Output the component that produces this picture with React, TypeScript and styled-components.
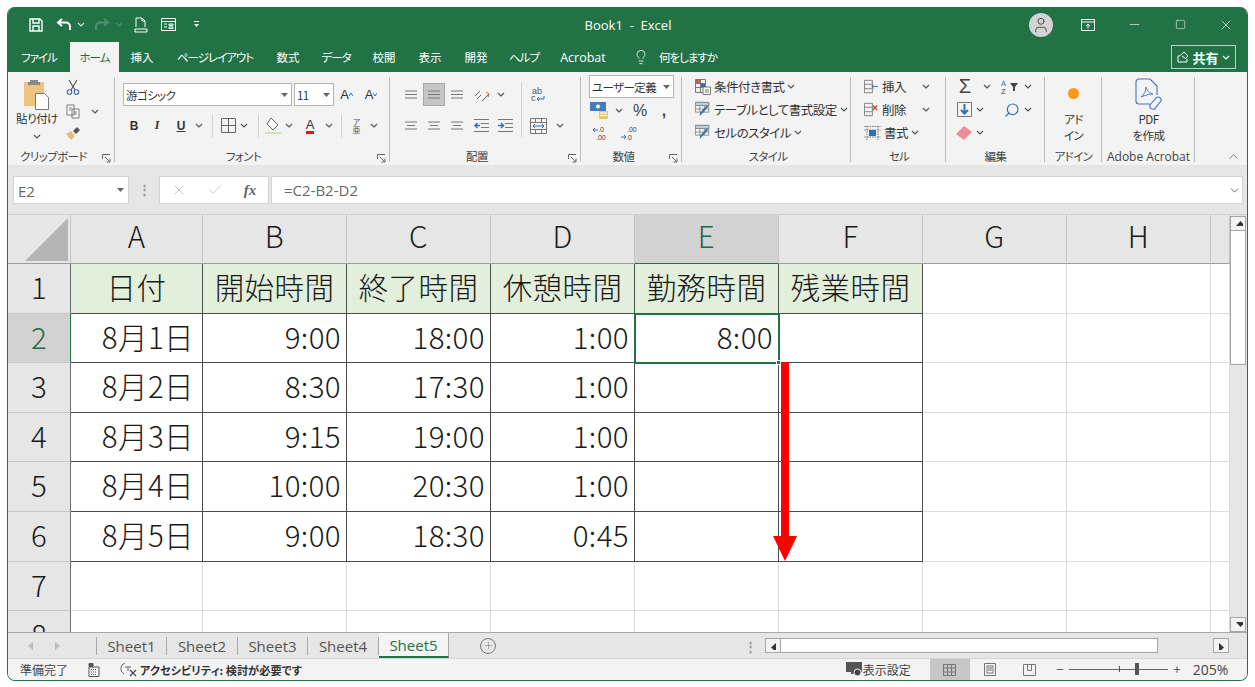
import React from 'react';
import styled, { createGlobalStyle } from 'styled-components';
import { Lightbulb, Minus, Plus, Search, Square, X, Check, ChevronDown, ChevronUp, User } from 'lucide-react';

const GlobalStyle = createGlobalStyle`
  html, body { margin: 0; padding: 0; background: #fff; }
  body { font-family: "Noto Sans CJK JP", "Noto Sans", sans-serif; color: #2b2b2b; }
`;

const GREEN = '#217346';

const Page = styled.div`
  width: 1255px;
  height: 687px;
  padding: 7px 7px 6px 7px;
  box-sizing: border-box;
  overflow: hidden;
`;

const Win = styled.div`
  height: 674px;
  display: flex;
  flex-direction: column;
  border-radius: 8px;
  overflow: hidden;
  background: #e6e6e6;
  border: 1px solid ${GREEN};
  border-top: 0;
  box-sizing: border-box;
`;

/* title bar */
const TitleBar = styled.div`
  height: 35px;
  flex: none;
  background: ${GREEN};
  color: #fff;
  display: flex;
  align-items: center;
  padding-left: 18px;
`;
const Slot = styled.div<{ $w: number }>`
  width: ${(p) => p.$w}px;
  flex: none;
  display: flex;
  align-items: center;
  justify-content: center;
`;
const QuickBar = styled.div`
  display: flex;
  align-items: center;
  width: 400px;
`;
const DocTitle = styled.div`
  width: 404px;
  text-align: center;
  font: 13px "Open Sans", "Noto Sans", sans-serif;
  white-space: pre;
`;
const Avatar = styled.div`
  width: 24px;
  height: 24px;
  border-radius: 50%;
  background: #d3d3d3;
  color: #4a4a4a;
  display: flex;
  align-items: center;
  justify-content: center;
  margin-left: 199px;
`;

/* tab strip */
const TabBar = styled.div`
  height: 30px;
  flex: none;
  background: ${GREEN};
  color: #fff;
  display: flex;
  align-items: stretch;
  font-size: 11.5px;
  font-feature-settings: "palt";
`;
const Tab = styled.div<{ $w: number; $active?: boolean; $tight?: boolean; $latin?: boolean }>`
  width: ${(p) => p.$w}px;
  flex: none;
  display: flex;
  align-items: center;
  justify-content: center;
  background: ${(p) => (p.$active ? '#f3f3f3' : 'transparent')};
  color: ${(p) => (p.$active ? '#1e6b41' : '#fff')};
  letter-spacing: ${(p) => (p.$tight ? '-1px' : '0')};
  ${(p) => (p.$latin ? 'font: 12.5px "Open Sans", "Noto Sans", sans-serif;' : '')}
`;
const TellMe = styled.div`
  display: flex;
  align-items: center;
  gap: 10px;
  margin-left: 16px;
  letter-spacing: -1px;
`;
const ShareBtn = styled.div`
  margin: 3px 11px 3px auto;
  width: 65px;
  box-sizing: border-box;
  border: 1px solid #b6d3c3;
  display: flex;
  align-items: center;
  justify-content: center;
  gap: 3px;
  font-size: 13px;
  font-weight: 700;
`;

/* ribbon */
const Ribbon = styled.div`
  height: 93px;
  flex: none;
  background: #f3f3f3;
  display: flex;
  position: relative;
  font-size: 12px;
  font-feature-settings: "palt";
  color: #333;
`;
const Group = styled.div<{ $w: number; $pad?: number; $plain?: boolean }>`
  width: ${(p) => p.$w}px;
  flex: none;
  box-sizing: border-box;
  position: relative;
  padding: 3px 0 0 ${(p) => p.$pad ?? 0}px;
  display: flex;
  flex-direction: column;
  &::after {
    content: '';
    position: absolute;
    right: 0;
    top: 5px;
    bottom: 3px;
    width: 1px;
    background: ${(p) => (p.$plain ? 'transparent' : '#bdbdbd')};
  }
`;
const GroupBody = styled.div`
  flex: 1;
  display: flex;
  flex-direction: column;
  min-height: 0;
`;
const GroupLabel = styled.div<{ $shift?: number; $latin?: boolean }>`
  height: 19px;
  flex: none;
  line-height: 21px;
  font-size: ${(p) => (p.$latin ? 12 : 11.5)}px;
  letter-spacing: ${(p) => (p.$latin ? 0 : -0.6)}px;
  ${(p) => (p.$latin ? 'font-family: "Open Sans", "Noto Sans", sans-serif;' : '')}
  text-align: center;
  color: #444;
  margin-right: ${(p) => p.$shift ?? 0}px;
  white-space: nowrap;
`;
const Launcher = styled.svg`
  position: absolute;
  right: 4px;
  bottom: 2px;
  width: 9px;
  height: 9px;
`;
const Row = styled.div<{ $h?: number; $top?: number }>`
  display: flex;
  align-items: center;
  height: ${(p) => p.$h ?? 23}px;
  margin-top: ${(p) => p.$top ?? 0}px;
  flex: none;
`;
const Cols = styled.div`
  display: flex;
`;
const Stack = styled.div<{ $w?: number; $top?: number }>`
  display: flex;
  flex-direction: column;
  align-items: center;
  width: ${(p) => (p.$w ? `${p.$w}px` : 'auto')};
  padding-top: ${(p) => p.$top ?? 0}px;
  flex: none;
`;
const LeftStack = styled.div`
  display: flex;
  flex-direction: column;
  flex: none;
`;
const Bar = styled.div<{ $h?: number }>`
  width: 1px;
  height: ${(p) => p.$h ?? 22}px;
  background: #d0d0d0;
  flex: none;
`;
const TallBar = styled(Bar)`
  margin-top: 7px;
`;
const Field = styled.div<{ $w: number; $h?: number }>`
  width: ${(p) => p.$w}px;
  height: ${(p) => p.$h ?? 23}px;
  box-sizing: border-box;
  flex: none;
  background: #fff;
  border: 1px solid #b4b4b4;
  display: flex;
  align-items: center;
  justify-content: space-between;
  padding: 0 3px 0 2px;
  font-size: 11.5px;
  letter-spacing: -0.6px;
  white-space: nowrap;
`;
const Pressed = styled.div`
  width: 22px;
  height: 23px;
  background: #c6c6c6;
  border: 1px solid #a8a8a8;
  box-sizing: border-box;
  display: flex;
  align-items: center;
  justify-content: center;
`;
const Bold = styled.span<{ $face?: string; $italic?: boolean; $under?: boolean; $size?: number }>`
  font: ${(p) => (p.$italic ? 'italic ' : '')}700 ${(p) => p.$size ?? 12}px ${(p) => p.$face ?? '"Liberation Sans"'}, sans-serif;
  text-decoration: ${(p) => (p.$under ? 'underline' : 'none')};
`;
const LetterA = styled.span<{ $mark?: string }>`
  font: 400 13px "Liberation Sans", sans-serif;
  line-height: 13px;
  border-bottom: ${(p) => (p.$mark ? `3px solid ${p.$mark}` : 'none')};
`;
const Glyph = styled.span<{ $size?: number; $weight?: number }>`
  font: ${(p) => p.$weight ?? 400} ${(p) => p.$size ?? 16}px "Liberation Sans", sans-serif;
  color: #444;
`;
const Furigana = styled.span`
  writing-mode: vertical-rl;
  font-size: 8px;
  line-height: 10px;
  letter-spacing: 0;
  color: #555;
`;
const StyleText = styled.span`
  font-size: 12.5px;
  letter-spacing: -0.5px;
  margin-left: 3px;
  white-space: nowrap;
`;
const BigLabel = styled.div`
  font-size: 11.5px;
  line-height: 16px;
  text-align: center;
  white-space: nowrap;
  letter-spacing: -0.5px;
`;
const PasteCaret = styled.div`
  margin-top: 8px;
  display: flex;
`;
const Dot = styled.div`
  width: 11px;
  height: 11px;
  border-radius: 50%;
  background: #f7981d;
  margin: 13px 0 12px;
`;
const Collapse = styled.div`
  position: absolute;
  right: 6px;
  bottom: 1px;
  color: #555;
  display: flex;
`;

/* formula bar */
const FormulaBand = styled.div`
  height: 50px;
  flex: none;
  box-sizing: border-box;
  background: #e6e6e6;
  padding: 11px 4px 11px 5px;
  display: flex;
  align-items: stretch;
  color: #666;
`;
const FBox = styled.div<{ $w?: number; $grow?: boolean }>`
  background: #fff;
  border: 1px solid #d4d4d4;
  box-sizing: border-box;
  width: ${(p) => (p.$w ? `${p.$w}px` : 'auto')};
  flex: ${(p) => (p.$grow ? '1' : 'none')};
  display: flex;
  align-items: center;
  font: 15px "Open Sans", "Noto Sans", sans-serif;
`;
const NameText = styled.span`
  margin-left: 4px;
  flex: 1;
  padding-top: 2px;
`;
const Grip = styled.div`
  width: 30px;
  flex: none;
  text-align: center;
  color: #999;
  line-height: 26px;
  font-size: 13px;
  font-weight: 700;
`;
const FormulaText = styled.span`
  flex: 1;
  margin-left: 12px;
`;

/* sheet */
const SheetArea = styled.div`
  flex: 1;
  min-height: 0;
  display: flex;
  background: #fff;
  position: relative;
  overflow: hidden;
  border-top: 1px solid #d0d0d0;
  margin-top: -1px;
`;
const CellGrid = styled.div`
  width: 1222px;
  flex: none;
  display: grid;
  grid-template-columns: 63px 132px repeat(7, 144px) 19px;
  grid-template-rows: 49px repeat(8, 49.6px);
  font-size: 29.5px;
  font-weight: 300;
  letter-spacing: 0.4px;
  color: #1a1a1a;
  line-height: 1;
`;
const Corner = styled.div`
  background: #e6e6e6;
  border-right: 1px solid #c6c6c6;
  border-bottom: 1px solid #9c9c9c;
  position: relative;
  &::after {
    content: '';
    position: absolute;
    right: 2px;
    bottom: 2px;
    border-style: solid;
    border-width: 0 0 43px 43px;
    border-color: transparent transparent #b5b5b5 transparent;
  }
`;
const ColHead = styled.div<{ $on?: boolean }>`
  background: ${(p) => (p.$on ? '#d2d2d2' : '#e6e6e6')};
  color: ${(p) => (p.$on ? '#1f6a41' : '#1a1a1a')};
  border-right: 1px solid #c6c6c6;
  border-bottom: 1px solid ${(p) => (p.$on ? GREEN : '#9c9c9c')};
  display: flex;
  align-items: center;
  justify-content: center;
  box-sizing: border-box;
  padding-bottom: 6px;
`;
const RowHead = styled.div<{ $on?: boolean }>`
  background: ${(p) => (p.$on ? '#d2d2d2' : '#e6e6e6')};
  color: ${(p) => (p.$on ? '#1f6a41' : '#1a1a1a')};
  border-bottom: 1px solid #c6c6c6;
  border-right: 1px solid ${(p) => (p.$on ? GREEN : '#6a6a6a')};
  display: flex;
  align-items: center;
  justify-content: center;
  box-sizing: border-box;
  padding-bottom: 3px;
`;
const Cell = styled.div<{ $ruled?: boolean; $head?: boolean; $sel?: boolean; $date?: boolean }>`
  box-sizing: border-box;
  border-right: 1px solid ${(p) => (p.$ruled ? '#4a4a4a' : '#dcdcdc')};
  border-bottom: 1px solid ${(p) => (p.$ruled ? '#4a4a4a' : '#dcdcdc')};
  background: ${(p) => (p.$head ? '#e2efda' : '#fff')};
  display: flex;
  align-items: center;
  justify-content: ${(p) => (p.$head ? 'center' : 'flex-end')};
  padding-right: ${(p) => (p.$head ? 0 : p.$date ? 8 : 5)}px;
  padding-bottom: 3px;
  position: relative;
  white-space: nowrap;
  ${(p) =>
    p.$sel
      ? `outline: 2px solid ${GREEN}; outline-offset: -1px; z-index: 2;
         &::after { content: ''; position: absolute; right: -3px; bottom: -3px; width: 5px; height: 5px; background: ${GREEN}; border: 1px solid #fff; box-sizing: border-box; }`
      : ''}
`;
const VScroll = styled.div`
  width: 17px;
  flex: none;
  background: #e6e6e6;
  display: flex;
  flex-direction: column;
  padding-top: 1px;
  box-sizing: border-box;
`;
const ScrollBtn = styled.div<{ $w?: number }>`
  width: ${(p) => p.$w ?? 16}px;
  height: 15px;
  flex: none;
  box-sizing: border-box;
  background: #f3f3f3;
  border: 1px solid #a6a6a6;
  display: flex;
  align-items: center;
  justify-content: center;
`;
const VThumb = styled.div`
  width: 16px;
  height: 134px;
  flex: none;
  background: #fff;
  border: 1px solid #a6a6a6;
  border-top: 0;
  box-sizing: border-box;
`;
const VTrack = styled.div`
  flex: 1;
`;
const Arrow = styled.svg`
  position: absolute;
  left: 764px;
  top: 147px;
  z-index: 3;
`;

/* sheet tabs */
const TabsBar = styled.div`
  height: 26px;
  flex: none;
  background: #e6e6e6;
  border-top: 1px solid #a8a8a8;
  box-sizing: border-box;
  display: flex;
  align-items: center;
  font: 15px "Open Sans", "Noto Sans", sans-serif;
  color: #555;
  padding-right: 18px;
`;
const NavArrows = styled.div`
  width: 89px;
  flex: none;
  display: flex;
  align-items: center;
  padding-left: 20px;
  gap: 22px;
  box-sizing: border-box;
  border-right: 1px solid #a8a8a8;
  height: 18px;
`;
const SheetTab = styled.div<{ $w: number; $on?: boolean }>`
  width: ${(p) => p.$w}px;
  height: ${(p) => (p.$on ? 25 : 18)}px;
  flex: none;
  box-sizing: border-box;
  display: flex;
  align-items: center;
  justify-content: center;
  background: ${(p) => (p.$on ? '#f4f4f4' : 'transparent')};
  color: ${(p) => (p.$on ? '#217346' : '#555')};
  border-right: 1px solid #a8a8a8;
  border-bottom: ${(p) => (p.$on ? `2px solid ${GREEN}` : '0')};
`;
const AddSheet = styled.div`
  width: 16px;
  height: 16px;
  border-radius: 50%;
  border: 1px solid #777;
  box-sizing: border-box;
  display: flex;
  align-items: center;
  justify-content: center;
  margin-left: 31px;
  color: #666;
`;
const HScroll = styled.div`
  display: flex;
  align-items: center;
  margin-left: auto;
`;
const HThumb = styled.div`
  width: 377px;
  height: 15px;
  background: #fff;
  border: 1px solid #a6a6a6;
  border-left: 0;
  box-sizing: border-box;
`;
const HTrack = styled.div`
  width: 55px;
`;

/* status */
const StatusBar = styled.div`
  height: 22px;
  flex: none;
  background: #f3f3f3;
  border-top: 1px solid #d6d6d6;
  box-sizing: border-box;
  display: flex;
  align-items: center;
  font-size: 12px;
  font-feature-settings: "palt";
  color: #444;
  padding-left: 12px;
`;
const A11y = styled.span`
  font-weight: 700;
  font-size: 11.2px;
  color: #333;
`;
const ViewBtn = styled.div<{ $on?: boolean }>`
  width: 40px;
  height: 100%;
  flex: none;
  background: ${(p) => (p.$on ? '#c6c6c6' : 'transparent')};
  display: flex;
  align-items: center;
  justify-content: center;
`;
const Slider = styled.div`
  width: 99px;
  height: 1px;
  background: #666;
  position: relative;
  margin: 0 4px;
`;
const Tick = styled.i<{ $x: number; $w: number; $h: number }>`
  position: absolute;
  left: ${(p) => p.$x}px;
  top: ${(p) => -p.$h / 2}px;
  width: ${(p) => p.$w}px;
  height: ${(p) => p.$h}px;
  background: #555;
`;
const Percent = styled.span`
  margin-left: 11px;
  font: 14px "Open Sans", "Noto Sans", sans-serif;
`;
const ZoomPad = styled.div`
  width: 5px;
  flex: none;
`;

/* icons */
const Chev = ({ c = '#555' }: { c?: string }) => (
  <svg width="8" height="5" viewBox="0 0 8 5"><path d="M1 1l3 3 3-3" fill="none" stroke={c} strokeWidth="1.2" /></svg>
);
const Tri = () => (
  <svg width="7" height="4" viewBox="0 0 7 4"><path d="M0 0h7L3.500 4z" fill="#666" /></svg>
);
const Caret = ({ down }: { down?: boolean }) => (
  <svg width="4" height="4" viewBox="0 0 4 4"><path d={down ? 'M0 0l2 3 2-3' : 'M0 3l2-3 2 3'} fill="none" stroke="#2f6fb7" /></svg>
);
const CaretRaise = styled.span`
  align-self: flex-start;
  margin-top: 5px;
  display: flex;
`;
const LaunchIcon = () => (
  <Launcher viewBox="0 0 9 9">
    <path d="M.5 5V.5H8M3 3l5 5M8 4.500V8H4.500" fill="none" stroke="#666" strokeWidth="1" />
  </Launcher>
);
const SaveIcon = () => (
  <svg width="14" height="14" viewBox="0 0 14 14" fill="none" stroke="#fff" strokeWidth="1.4">
    <path d="M1 1h10l2 2v10H1zM4 1v4h6V1M4 13V8h6v5" />
  </svg>
);
const UndoIcon = ({ c }: { c: string }) => (
  <svg width="16" height="13" viewBox="0 0 16 13" fill="none" stroke={c} strokeWidth="2">
    <path d="M6 1L2 4.500 6 8M2 4.500h8a4 4 0 0 1 4 4V12" />
  </svg>
);
const RedoIcon = ({ c }: { c: string }) => (
  <svg width="16" height="13" viewBox="0 0 16 13" fill="none" stroke={c} strokeWidth="2">
    <path d="M10 1l4 3.500L10 8M14 4.500H6a4 4 0 0 0-4 4V12" />
  </svg>
);
const PreviewIcon = () => (
  <svg width="14" height="16" viewBox="0 0 14 16" fill="none" stroke="#fff" strokeWidth="1">
    <path d="M2 10V1h6l3 3v6M8 1v3h3M1 12h12v3H1z" />
  </svg>
);
const FormIcon = () => (
  <svg width="15" height="13" viewBox="0 0 15 13" fill="none" stroke="#fff" strokeWidth="1">
    <path d="M.5.5h14v12H.5zM.5 3.500h14M3 6h3M3 9h3M8 6h4v1.500H8zM8 9h4v1.500H8z" />
  </svg>
);
const Customize = () => (
  <svg width="7" height="7" viewBox="0 0 7 7" fill="#fff"><path d="M1 0h5v1H1zM1 3h5L3.500 6z" /></svg>
);
const DisplayIcon = () => (
  <svg width="14" height="12" viewBox="0 0 14 12" fill="none" stroke="#fff" strokeWidth="1">
    <path d="M.5.5h13v11H.5zM.5 3h13M7 9.500V5M5 7l2-2 2 2" />
  </svg>
);
const ShareIcon = () => (
  <svg width="12" height="12" viewBox="0 0 12 12" fill="none" stroke="#fff" strokeWidth="1">
    <path d="M1 5v6h9V8M1 5c2 0 3-1 4-2l2-2 4 4-2.500 2.500L5 5" />
  </svg>
);
const PasteIcon = () => (
  <svg width="26" height="31" viewBox="0 0 26 31">
    <path d="M0 3h20v24H0z" fill="#ecc37f" />
    <path d="M6 3V1h8v2h2v3H4V3z" fill="#8a8a8a" />
    <path d="M11.500 14.500h9l4 4v12h-13z" fill="#fff" stroke="#777" />
  </svg>
);
const ScissorsIcon = () => (
  <svg width="14" height="16" viewBox="0 0 14 16" fill="none" stroke="#555" strokeWidth="1.100">
    <path d="M3 1l6 10M11 1L5 11" />
    <circle cx="3.500" cy="13" r="2.300" stroke="#3a6ea5" />
    <circle cx="10.500" cy="13" r="2.300" stroke="#3a6ea5" />
  </svg>
);
const CopyIcon = () => (
  <svg width="14" height="15" viewBox="0 0 14 15" fill="#fff" stroke="#777" strokeWidth="1">
    <path d="M1 1h7v10H1zM6 5h7v9H6zM8 8h3M8 10h3M3 4h3M3 6h2" />
  </svg>
);
const BrushIcon = () => (
  <svg width="15" height="13" viewBox="0 0 15 13">
    <path d="M0 7l5-3 4 5-4 4z" fill="#e6bd74" />
    <path d="M7 4l4-4 3 3-4 4z" fill="#555" />
  </svg>
);
const BorderIcon = () => (
  <svg width="15" height="15" viewBox="0 0 15 15" fill="none" stroke="#666"><path d="M.5.5h14v14H.5zM7.500.5v14M.5 7.500h14" /></svg>
);
const FillIcon = () => (
  <svg width="16" height="18" viewBox="0 0 16 18">
    <path d="M6 1l7 7-5 5-6-6z" fill="#fff" stroke="#666" />
    <path d="M0 15h16v2H0z" fill="#cfe3c3" />
  </svg>
);
const LinesIcon = ({ w = [12, 12, 12] }: { w?: number[] }) => (
  <svg width="14" height="11" viewBox="0 0 14 11" stroke="#777">
    {w.map((x, i) => <path key={i} d={`M${(14 - x) / 2} ${2 + i * 3.5}h${x}`} />)}
  </svg>
);
const OrientIcon = () => (
  <svg width="18" height="16" viewBox="0 0 18 16" fill="none" stroke="#666">
    <path d="M2 9l5-5M4 12l4-4M9 14l7-7" />
    <path d="M13 5l3 2-1 3" stroke="#d05b5b" />
  </svg>
);
const IndentIcon = ({ flip }: { flip?: boolean }) => (
  <svg width="15" height="13" viewBox="0 0 15 13" fill="none" stroke="#777">
    <path d="M0 .5h15M7 4.500h8M7 8.500h8M0 12.500h15" />
    <path d={flip ? 'M0 6.500h5M3 4l2.500 2.500L3 9' : 'M6 6.500H1M3.500 4L1 6.500 3.500 9'} stroke="#2f6fb7" strokeWidth="1.400" />
  </svg>
);
const MergeIcon = () => (
  <svg width="17" height="16" viewBox="0 0 17 16" fill="none" stroke="#777">
    <path d="M.5.5h16v15H.5zM.5 4.500h16M.5 11.500h16M5.500.5v4M11.500.5v4M5.500 11.500v4M11.500 11.500v4" />
    <path d="M3 8h11M5 6L3 8l2 2M12 6l2 2-2 2" stroke="#2f6fb7" />
  </svg>
);
const WrapIcon = () => (
  <svg width="16" height="17" viewBox="0 0 16 17">
    <text x="2" y="7.500" fontSize="9" fontFamily="Liberation Sans" fill="#555">ab</text>
    <text x="1" y="15" fontSize="9" fontFamily="Liberation Sans" fill="#555">c</text>
    <path d="M14 10v3H7M9 11l-2 2 2 2" fill="none" stroke="#2f6fb7" />
  </svg>
);
const CurrencyIcon = () => (
  <svg width="19" height="17" viewBox="0 0 19 17">
    <path d="M0 0h16v9H0z" fill="#3f7fbf" />
    <circle cx="8" cy="4.500" r="2" fill="#fff" />
    <path d="M9 9h9v8H9z" fill="#ecc37f" />
    <path d="M10 11h7M10 13.500h7" stroke="#fff" />
  </svg>
);
const DecIcon = ({ more }: { more?: boolean }) => (
  <svg width="17" height="15" viewBox="0 0 17 15">
    <text x={more ? 6 : 5} y="6" fontSize="7" fontFamily="Liberation Sans" fill="#444">{more ? '.00' : '.0'}</text>
    <text x={more ? 5 : 3} y="14" fontSize="7" fontFamily="Liberation Sans" fill="#444">{more ? '.0' : '.00'}</text>
    <path d={more ? 'M0 11h5M3 9l2 2-2 2' : 'M0 4h5M2 2L0 4l2 2'} stroke="#2f6fb7" fill="none" />
  </svg>
);
const CondIcon = () => (
  <svg width="16" height="16" viewBox="0 0 16 16" fill="none" stroke="#777">
    <path d="M.5.5h10v13H.5zM.5 4.500h10M.5 8.500h10M5.500.5v13" />
    <path d="M1 1h4v3H1z" fill="#d05b5b" stroke="none" />
    <path d="M6 5h4v3H6z" fill="#2f6fb7" stroke="none" />
    <path d="M8 8h7.500v7.500H8z" fill="#fff" />
    <path d="M10 11h4M10 13h4" />
  </svg>
);
const TableIcon = () => (
  <svg width="16" height="17" viewBox="0 0 18 17" fill="none" stroke="#888">
    <path d="M.5.5h15v11H.5zM.5 4h15M.5 8h15M5.500.5v11M10.500.5v11" />
    <path d="M.5.5h15V4H.5z" fill="#b9cfe4" />
    <path d="M15 5l-7 8-3 3 1-4 7-8z" fill="#2f6fb7" stroke="none" />
  </svg>
);
const InsertIcon = () => (
  <svg width="17" height="15" viewBox="0 0 17 15" fill="none" stroke="#777">
    <path d="M.5.5h9v14h-9zM.5 5h9M.5 10h9" />
    <path d="M9 7.500h7M11 5.500l-2 2 2 2" stroke="#2f6fb7" />
  </svg>
);
const DeleteIcon = () => (
  <svg width="17" height="15" viewBox="0 0 17 15" fill="none" stroke="#777">
    <path d="M.5.5h9v14h-9zM.5 5h9M.5 10h9" />
    <path d="M10 3l5 5M15 3l-5 5" stroke="#d04a2f" strokeWidth="1.600" />
  </svg>
);
const FormatIcon = () => (
  <svg width="17" height="16" viewBox="0 0 17 16" fill="none" stroke="#777" strokeDasharray="1.500 1">
    <path d="M.5 1.500h16M.5 5h16M.5 12h16M3 1v14M14 1v14" />
    <path d="M5 5h7v6H5z" fill="#2f6fb7" stroke="none" />
  </svg>
);
const FillDown = () => (
  <svg width="15" height="15" viewBox="0 0 15 15" fill="none">
    <path d="M.5.5h14v14H.5z" stroke="#777" />
    <path d="M7.500 2v9M4 8l3.500 3.500L11 8" stroke="#2f6fb7" strokeWidth="2" />
  </svg>
);
const Eraser = () => (
  <svg width="17" height="14" viewBox="0 0 17 14"><path d="M0 8l8-8 8 6-8 8z" fill="#ee8c99" /></svg>
);
const SortIcon = () => (
  <svg width="18" height="16" viewBox="0 0 18 16">
    <text x="0" y="7" fontSize="7.500" fontFamily="Liberation Sans" fill="#2f6fb7">A</text>
    <text x="0" y="15" fontSize="7.500" fontFamily="Liberation Sans" fill="#444">Z</text>
    <path d="M9 4h8l-3 4v4h-2V8z" fill="#444" />
  </svg>
);
const AcrobatIcon = () => (
  <svg width="28" height="32" viewBox="0 0 28 32" fill="none" stroke="#3f73c4" strokeWidth="1.100">
    <path d="M15 26H4a3 3 0 0 1-3-3V4a3 3 0 0 1 3-3h11l7 7v9" />
    <path d="M6 19c3-2 5-6 5-10 1 4 3 6 7 7-4 0-7 1-12 3z" strokeWidth=".9" />
    <path d="M15 27l6-7a3 3 0 0 1 5 3l-5 6a3 3 0 0 1-6-2z" />
  </svg>
);
const CalcIcon = () => (
  <svg width="12" height="14" viewBox="0 0 12 14" fill="none" stroke="#555">
    <path d="M1 4h10v9.500H1z" />
    <path d="M1 .5h4v3H1z" fill="#555" />
    <path d="M3 6.500h6M3 9h6M3 11.500h6" strokeDasharray="1 1" />
  </svg>
);
const A11yIcon = () => (
  <svg width="17" height="15" viewBox="0 0 17 15" fill="none" stroke="#666">
    <path d="M5 1a6 6 0 0 0-1 11M8 5v4M5 5h6" />
    <path d="M10 8l6 6M16 8l-6 6" stroke="#444" strokeWidth="1.200" />
  </svg>
);
const DisplaySetting = () => (
  <svg width="17" height="15" viewBox="0 0 17 15">
    <path d="M0 0h16v10H9v2H5v-2H0z" fill="#555" />
    <circle cx="11.500" cy="10.500" r="3.500" fill="#444" stroke="#f3f3f3" />
  </svg>
);
const GridView = () => (
  <svg width="13" height="12" viewBox="0 0 13 12" fill="none" stroke="#777">
    <path d="M.5.5h12v11H.5zM4.500.5v11M8.500.5v11M.5 4h12M.5 8h12" />
  </svg>
);
const PageView = () => (
  <svg width="12" height="13" viewBox="0 0 12 13" fill="none" stroke="#777">
    <path d="M.5.5h11v12H.5zM3 3h6v7H3zM4 5h4M4 7h4" />
  </svg>
);
const BreakView = () => (
  <svg width="13" height="12" viewBox="0 0 13 12" fill="none" stroke="#777">
    <path d="M.5.5h12v11H.5zM4.500.5v6h4v-6" />
  </svg>
);
const ScrollTri = ({ dir }: { dir: 'up' | 'down' | 'left' | 'right' }) => {
  const d = { up: 'M0 5L4.500 0 9 5z', down: 'M0 0h9L4.500 5z', left: 'M5 0v9L0 4.500z', right: 'M0 0v9l5-4.500z' }[dir];
  return <svg width="9" height="9" viewBox="0 0 9 9"><path d={d} fill="#333" transform="translate(2 2)" /></svg>;
};
const NavTri = ({ flip }: { flip?: boolean }) => (
  <svg width="5" height="8" viewBox="0 0 5 8"><path d={flip ? 'M0 0l5 4-5 4z' : 'M5 0L0 4l5 4z'} fill="#bcbcbc" /></svg>
);

const columns = ['A', 'B', 'C', 'D', 'E', 'F', 'G', 'H', ''];
const headers = ['日付', '開始時間', '終了時間', '休憩時間', '勤務時間', '残業時間'];
const rows = [
  ['8月1日', '9:00', '18:00', '1:00', '8:00', ''],
  ['8月2日', '8:30', '17:30', '1:00', '', ''],
  ['8月3日', '9:15', '19:00', '1:00', '', ''],
  ['8月4日', '10:00', '20:30', '1:00', '', ''],
  ['8月5日', '9:00', '18:30', '0:45', '', ''],
];
const sheets: [string, number][] = [['Sheet1', 70], ['Sheet2', 71], ['Sheet3', 70], ['Sheet4', 71]];

const Blanks = ({ n }: { n: number }) => (
  <>
    {Array.from({ length: n }).map((_, i) => <Cell key={i} />)}
  </>
);

const Grid = () => (
  <CellGrid>
    <Corner />
    {columns.map((c, i) => <ColHead key={i} $on={c === 'E'}>{c}</ColHead>)}
    <RowHead>1</RowHead>
    {headers.map((h) => <Cell key={h} $ruled $head>{h}</Cell>)}
    <Blanks n={3} />
    {rows.map((r, i) => (
      <React.Fragment key={i}>
        <RowHead $on={i === 0}>{i + 2}</RowHead>
        {r.map((v, j) => <Cell key={j} $ruled $date={j === 0} $sel={i === 0 && j === 4}>{v}</Cell>)}
        <Blanks n={3} />
      </React.Fragment>
    ))}
    <RowHead>7</RowHead>
    <Blanks n={9} />
    <RowHead>8</RowHead>
    <Blanks n={9} />
  </CellGrid>
);

export default function App() {
  return (
    <Page>
      <GlobalStyle />
      <Win>
        <TitleBar>
          <QuickBar>
            <Slot $w={20}><SaveIcon /></Slot>
            <Slot $w={6} />
            <Slot $w={24}><UndoIcon c="#fff" /></Slot>
            <Slot $w={10}><Chev c="#cfe3d8" /></Slot>
            <Slot $w={5} />
            <Slot $w={22}><RedoIcon c="#4f9070" /></Slot>
            <Slot $w={12}><Chev c="#4f9070" /></Slot>
            <Slot $w={7} />
            <Slot $w={18}><PreviewIcon /></Slot>
            <Slot $w={9} />
            <Slot $w={18}><FormIcon /></Slot>
            <Slot $w={15} />
            <Slot $w={8}><Customize /></Slot>
          </QuickBar>
          <DocTitle>{'Book1  -  Excel'}</DocTitle>
          <Avatar><User size={18} strokeWidth={1.3} /></Avatar>
          <Slot $w={70}><DisplayIcon /></Slot>
          <Slot $w={22}><Minus size={15} strokeWidth={1} /></Slot>
          <Slot $w={70}><Square size={11} strokeWidth={1.2} /></Slot>
          <Slot $w={22}><X size={16} strokeWidth={1} /></Slot>
        </TitleBar>

        <TabBar>
          <Tab $w={62} $tight>ファイル</Tab>
          <Tab $w={49} $active $tight>ホーム</Tab>
          <Tab $w={46}>挿入</Tab>
          <Tab $w={100} $tight>ページレイアウト</Tab>
          <Tab $w={46}>数式</Tab>
          <Tab $w={50} $tight>データ</Tab>
          <Tab $w={46}>校閲</Tab>
          <Tab $w={46}>表示</Tab>
          <Tab $w={46}>開発</Tab>
          <Tab $w={50} $tight>ヘルプ</Tab>
          <Tab $w={68} $latin>Acrobat</Tab>
          <TellMe>
            <Lightbulb size={16} strokeWidth={1.2} />
            <span>何をしますか</span>
          </TellMe>
          <ShareBtn>
            <ShareIcon />
            <span>共有</span>
            <Chev c="#fff" />
          </ShareBtn>
        </TabBar>

        <Ribbon>
          <Group $w={107}>
            <GroupBody>
              <Cols>
                <Stack $w={58} $top={4}>
                  <Slot $w={58}><PasteIcon /></Slot>
                  <BigLabel>貼り付け</BigLabel>
                  <PasteCaret><Chev /></PasteCaret>
                </Stack>
                <Stack $w={14}>
                  <Row $h={24}><ScissorsIcon /></Row>
                  <Row $h={24}><CopyIcon /></Row>
                  <Row $h={20}><BrushIcon /></Row>
                </Stack>
                <Stack $w={30}>
                  <Row $h={24} />
                  <Row $h={24}><Chev /></Row>
                </Stack>
              </Cols>
            </GroupBody>
            <GroupLabel $shift={16}>クリップボード</GroupLabel>
            <LaunchIcon />
          </Group>

          <Group $w={275} $pad={8}>
            <GroupBody>
              <Row $top={8}>
                <Field $w={169}>游ゴシック<Tri /></Field>
                <Slot $w={2} />
                <Field $w={40}>11<Tri /></Field>
                <Slot $w={25}><LetterA>A</LetterA><CaretRaise><Caret /></CaretRaise></Slot>
                <Slot $w={24}><LetterA>A</LetterA><CaretRaise><Caret down /></CaretRaise></Slot>
              </Row>
              <Row $top={8}>
                <Slot $w={22}><Bold>B</Bold></Slot>
                <Slot $w={24}><Bold $face='"Liberation Serif"' $italic>I</Bold></Slot>
                <Slot $w={24}><Bold $under>U</Bold></Slot>
                <Slot $w={12}><Chev /></Slot>
                <Slot $w={14}><Bar /></Slot>
                <Slot $w={18}><BorderIcon /></Slot>
                <Slot $w={14}><Chev /></Slot>
                <Slot $w={14}><Bar /></Slot>
                <Slot $w={16}><FillIcon /></Slot>
                <Slot $w={16}><Chev /></Slot>
                <Slot $w={26}><LetterA $mark="#e8101c">A</LetterA></Slot>
                <Slot $w={12}><Chev /></Slot>
                <Slot $w={12}><Bar /></Slot>
                <Slot $w={18}><Furigana>ア亜</Furigana></Slot>
                <Slot $w={18}><Chev /></Slot>
              </Row>
            </GroupBody>
            <GroupLabel $shift={26}>フォント</GroupLabel>
            <LaunchIcon />
          </Group>

          <Group $w={191} $pad={9}>
            <GroupBody>
              <Cols>
                <LeftStack>
                  <Row $top={8}>
                    <Slot $w={24}><LinesIcon /></Slot>
                    <Pressed><LinesIcon /></Pressed>
                    <Slot $w={24}><LinesIcon /></Slot>
                    <Slot $w={26}><OrientIcon /></Slot>
                    <Slot $w={12}><Chev /></Slot>
                  </Row>
                  <Row $top={8}>
                    <Slot $w={24}><LinesIcon w={[12, 8, 12]} /></Slot>
                    <Slot $w={22}><LinesIcon w={[12, 8, 12]} /></Slot>
                    <Slot $w={24}><LinesIcon w={[12, 8, 12]} /></Slot>
                    <Slot $w={24}><IndentIcon /></Slot>
                    <Slot $w={24}><IndentIcon flip /></Slot>
                  </Row>
                </LeftStack>
                <Slot $w={4} />
                <TallBar $h={55} />
                <LeftStack>
                  <Row $top={8}><Slot $w={32}><WrapIcon /></Slot></Row>
                  <Row $top={8}>
                    <Slot $w={32}><MergeIcon /></Slot>
                    <Slot $w={12}><Chev /></Slot>
                  </Row>
                </LeftStack>
              </Cols>
            </GroupBody>
            <GroupLabel $shift={26}>配置</GroupLabel>
            <LaunchIcon />
          </Group>

          <Group $w={101} $pad={8}>
            <GroupBody>
              <Field $w={85}>ユーザー定義<Tri /></Field>
              <Row $top={1}>
                <Slot $w={20}><CurrencyIcon /></Slot>
                <Slot $w={20}><Chev /></Slot>
                <Slot $w={22}><Glyph>%</Glyph></Slot>
                <Slot $w={26}><Glyph $weight={700}>,</Glyph></Slot>
              </Row>
              <Row>
                <Slot $w={24}><DecIcon /></Slot>
                <Slot $w={4} />
                <Slot $w={24}><DecIcon more /></Slot>
              </Row>
            </GroupBody>
            <GroupLabel $shift={24}>数値</GroupLabel>
            <LaunchIcon />
          </Group>

          <Group $w={169} $pad={13}>
            <GroupBody>
              <Row><CondIcon /><StyleText>条件付き書式</StyleText><Slot $w={14}><Chev /></Slot></Row>
              <Row><TableIcon /><StyleText>テーブルとして書式設定</StyleText><Slot $w={14}><Chev /></Slot></Row>
              <Row><TableIcon /><StyleText>セルのスタイル</StyleText><Slot $w={14}><Chev /></Slot></Row>
            </GroupBody>
            <GroupLabel $shift={10}>スタイル</GroupLabel>
          </Group>

          <Group $w={95} $pad={13}>
            <GroupBody>
              <Row><InsertIcon /><StyleText>挿入</StyleText><Slot $w={40}><Chev /></Slot></Row>
              <Row><DeleteIcon /><StyleText>削除</StyleText><Slot $w={40}><Chev /></Slot></Row>
              <Row><FormatIcon /><StyleText>書式</StyleText><Slot $w={14}><Chev /></Slot></Row>
            </GroupBody>
            <GroupLabel $shift={12}>セル</GroupLabel>
          </Group>

          <Group $w={99} $pad={8}>
            <GroupBody>
              <Row>
                <Slot $w={22}><Glyph $size={20}>Σ</Glyph></Slot>
                <Slot $w={22}><Chev /></Slot>
                <Slot $w={24}><SortIcon /></Slot>
                <Slot $w={12}><Chev /></Slot>
              </Row>
              <Row>
                <Slot $w={20}><FillDown /></Slot>
                <Slot $w={12}><Chev /></Slot>
                <Slot $w={16} />
                <Slot $w={20}><Search size={16} strokeWidth={1.8} color="#2f6fb7" style={{ transform: 'scaleX(-1)' }} /></Slot>
                <Slot $w={12}><Chev /></Slot>
              </Row>
              <Row>
                <Slot $w={20}><Eraser /></Slot>
                <Slot $w={12}><Chev /></Slot>
              </Row>
            </GroupBody>
            <GroupLabel $shift={8}>編集</GroupLabel>
          </Group>

          <Group $w={57}>
            <GroupBody>
              <Stack>
                <Dot />
                <BigLabel>アド<br />イン</BigLabel>
              </Stack>
            </GroupBody>
            <GroupLabel>アドイン</GroupLabel>
          </Group>

          <Group $w={93}>
            <GroupBody>
              <Stack>
                <Row $h={34} $top={2}><AcrobatIcon /></Row>
                <BigLabel>PDF<br />を作成</BigLabel>
              </Stack>
            </GroupBody>
            <GroupLabel $latin>Adobe Acrobat</GroupLabel>
          </Group>
          <Collapse><ChevronUp size={15} strokeWidth={1.2} /></Collapse>
        </Ribbon>

        <FormulaBand>
          <FBox $w={116}><NameText>E2</NameText><Slot $w={16}><Tri /></Slot></FBox>
          <Grip>⋮</Grip>
          <FBox $w={110}>
            <Slot $w={38}><X size={16} strokeWidth={1.2} color="#b5b5b5" /></Slot>
            <Slot $w={34}><Check size={16} strokeWidth={1.2} color="#b5b5b5" /></Slot>
            <Slot $w={36}><Bold $face='"Liberation Serif"' $italic $size={15}>fx</Bold></Slot>
          </FBox>
          <Slot $w={2} />
          <FBox $grow>
            <FormulaText>=C2-B2-D2</FormulaText>
            <Slot $w={16}><ChevronDown size={13} strokeWidth={1.8} /></Slot>
          </FBox>
        </FormulaBand>

        <SheetArea>
          <Grid />
          <VScroll>
            <ScrollBtn><ScrollTri dir="up" /></ScrollBtn>
            <VThumb />
            <VTrack />
            <ScrollBtn><ScrollTri dir="down" /></ScrollBtn>
          </VScroll>
          <Arrow width="26" height="200" viewBox="0 0 26 200">
            <path d="M9 0h8v174h8L13 199 1 174h8z" fill="#fe0000" />
          </Arrow>
        </SheetArea>

        <TabsBar>
          <NavArrows><NavTri /><NavTri flip /></NavArrows>
          {sheets.map(([s, w]) => <SheetTab key={s} $w={w}>{s}</SheetTab>)}
          <SheetTab $w={70} $on>Sheet5</SheetTab>
          <AddSheet><Plus size={11} strokeWidth={1} /></AddSheet>
          <HScroll>
            <Grip>⋮</Grip>
            <ScrollBtn><ScrollTri dir="left" /></ScrollBtn>
            <HThumb />
            <HTrack />
            <ScrollBtn><ScrollTri dir="right" /></ScrollBtn>
          </HScroll>
        </TabsBar>

        <StatusBar>
          <span>準備完了</span>
          <Slot $w={52}><CalcIcon /></Slot>
          <A11yIcon />
          <Slot $w={3} />
          <A11y>アクセシビリティ: 検討が必要です</A11y>
          <Slot $w={544} />
          <DisplaySetting />
          <span>表示設定</span>
          <Slot $w={19} />
          <ViewBtn $on><GridView /></ViewBtn>
          <ViewBtn><PageView /></ViewBtn>
          <ViewBtn><BreakView /></ViewBtn>
          <ZoomPad />
          <Slot $w={10}><Minus size={11} /></Slot>
          <Slider>
            <Tick $x={50} $w={1} $h={6} />
            <Tick $x={66} $w={4} $h={12} />
          </Slider>
          <Slot $w={10}><Plus size={11} /></Slot>
          <Percent>205%</Percent>
        </StatusBar>
      </Win>
    </Page>
  );
}
